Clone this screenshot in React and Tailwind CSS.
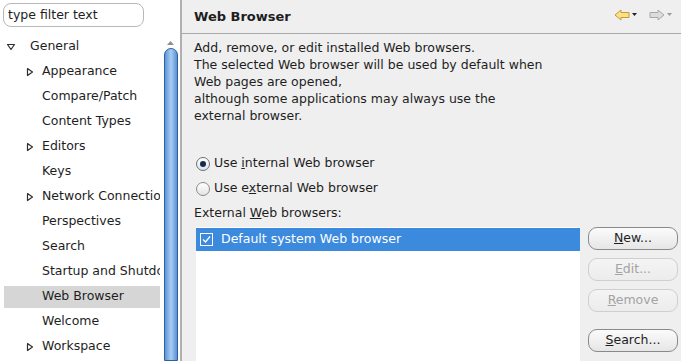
const tree = [
  { label: "Appearance", arrow: true },
  { label: "Compare/Patch" },
  { label: "Content Types" },
  { label: "Editors", arrow: true },
  { label: "Keys" },
  { label: "Network Connections", arrow: true },
  { label: "Perspectives" },
  { label: "Search" },
  { label: "Startup and Shutdown" },
  { label: "Web Browser", selected: true },
  { label: "Welcome" },
  { label: "Workspace", arrow: true },
];

function RightTri() {
  return (
    <svg width="8" height="10" viewBox="0 0 8 10" className="shrink-0">
      <path d="M1.5 1.5 L6.5 5 L1.5 8.5 Z" fill="none" stroke="#2e2e2e" strokeWidth="1.2" strokeLinejoin="round" />
    </svg>
  );
}

function DownTri() {
  return (
    <svg width="10" height="8" viewBox="0 0 10 8" className="shrink-0">
      <path d="M1.5 1.5 L8.5 1.5 L5 6.5 Z" fill="none" stroke="#2e2e2e" strokeWidth="1.2" strokeLinejoin="round" />
    </svg>
  );
}

function Arrow({ dir, enabled }) {
  const fill = enabled ? "#fbe08a" : "#dcdcdc";
  const stroke = enabled ? "#c69a2c" : "#a8a8a8";
  const d =
    dir === "left"
      ? "M1 6 L7 1 L7 3.5 L15 3.5 L15 8.5 L7 8.5 L7 11 Z"
      : "M15 6 L9 1 L9 3.5 L1 3.5 L1 8.5 L9 8.5 L9 11 Z";
  return (
    <div className="flex items-center gap-[2px]">
      <svg width="16" height="12" viewBox="0 0 16 12">
        <path d={d} fill={fill} stroke={stroke} strokeWidth="1" strokeLinejoin="round" />
      </svg>
      <svg width="5" height="4" viewBox="0 0 5 4">
        <path d="M0 0 L5 0 L2.5 3 Z" fill={enabled ? "#222" : "#9a9a9a"} />
      </svg>
    </div>
  );
}

function Button({ children, disabled }) {
  return (
    <div
      className={
        "h-[23px] w-[90px] rounded-[9px] border flex items-center justify-center bg-gradient-to-b " +
        (disabled
          ? "border-[#cfcfcf] from-[#f4f4f4] to-[#ececec] text-[#a3a3a3]"
          : "border-[#8a8a8a] from-[#fbfbfb] to-[#e6e6e6] text-[#1e1e1e]")
      }
    >
      {children}
    </div>
  );
}

export default function App() {
  return (
    <div
      className="w-[681px] h-[361px] flex overflow-hidden text-[12.5px] text-[#1e1e1e]"
      style={{ fontFamily: '"DejaVu Sans", Verdana, sans-serif' }}
    >
      {/* left: preference tree */}
      <div className="w-[180px] shrink-0 bg-white flex flex-col">
        <div className="h-[34px] shrink-0 pt-[3px] pl-[3px]">
          <div className="h-[24px] w-[141px] rounded-[8px] border border-[#b8b8b8] flex items-center pl-[4px] text-[#1e1e1e]">
            type filter text
          </div>
        </div>
        <div className="flex-1 flex min-h-0">
          <div className="flex-1 min-w-0 overflow-hidden pl-[4px] pr-[3px]">
            <div className="h-[25px] flex items-center pl-[2px] gap-[14px]">
              <DownTri />
              <span>General</span>
            </div>
            {tree.map((t) => (
              <div key={t.label} className="h-[25px] flex items-center">
                <div
                  className={
                    "h-[22px] w-full flex items-center pl-[22px] whitespace-nowrap overflow-hidden " +
                    (t.selected ? "bg-[#d6d6d6]" : "")
                  }
                >
                  <div className="w-[16px] shrink-0">{t.arrow && <RightTri />}</div>
                  <span>{t.label}</span>
                </div>
              </div>
            ))}
          </div>
          {/* scrollbar */}
          <div className="w-[17px] shrink-0 flex flex-col items-center pr-[2px]">
            <div className="h-[12px] flex items-end justify-center">
              <svg width="7" height="5" viewBox="0 0 7 5">
                <path d="M0 4 L7 4 L3.5 0 Z" fill="#8e8e8e" />
              </svg>
            </div>
            <div className="flex-1 w-[14px] mt-[2px] rounded-t-[7px] border border-[#2f5f9e] bg-gradient-to-r from-[#5d96d8] via-[#a9cdf4] to-[#5a90d2]" />
          </div>
        </div>
      </div>

      {/* right: page */}
      <div className="flex-1 bg-[#efefef] border-l-2 border-[#b0b0b0] flex flex-col">
        <div className="h-[34px] shrink-0 border-b border-[#a9a9a9] flex items-center justify-between pl-[12px] pr-[9px]">
          <span className="font-bold text-[13px] pt-[1px]">Web Browser</span>
          <div className="flex items-center gap-[12px] mt-[-3px]">
            <Arrow dir="left" enabled />
            <Arrow dir="right" />
          </div>
        </div>
        <div className="flex-1 flex flex-col pl-[12px] pr-[3px] min-h-0">
          <div className="leading-[17px] pt-[5px]">
            <div>Add, remove, or edit installed Web browsers.</div>
            <div>The selected Web browser will be used by default when</div>
            <div>Web pages are opened,</div>
            <div>although some applications may always use the</div>
            <div>external browser.</div>
          </div>
          <div className="mt-[27px] h-[25px] flex items-center gap-[4px] pl-[2px]">
            <div className="w-[14px] h-[14px] rounded-full border border-[#6f6f6f] bg-gradient-to-b from-[#ffffff] to-[#d8e4f0] flex items-center justify-center">
              <div className="w-[6px] h-[6px] rounded-full bg-[#1a2b44]" />
            </div>
            <span>
              Use <span className="underline">i</span>nternal Web browser
            </span>
          </div>
          <div className="h-[25px] flex items-center gap-[4px] pl-[2px]">
            <div className="w-[14px] h-[14px] rounded-full border border-[#8a8a8a] bg-gradient-to-b from-[#ffffff] to-[#e4e4e4]" />
            <span>
              Use e<span className="underline">x</span>ternal Web browser
            </span>
          </div>
          <div className="h-[25px] flex items-center">
            <span>
              External <span className="underline">W</span>eb browsers:
            </span>
          </div>
          <div className="flex-1 flex gap-[8px] mt-[1px] min-h-0">
            <div className="w-[384px] ml-[2px] bg-white pt-[1px]">
              <div className="h-[23px] bg-[#3b8ade] flex items-center pl-[4px] gap-[8px] text-white">
                <div className="w-[13px] h-[13px] border border-white flex items-center justify-center">
                  <svg width="9" height="9" viewBox="0 0 9 9">
                    <path d="M1 4.5 L3.5 7 L8 1.5" fill="none" stroke="#fff" strokeWidth="1.3" />
                  </svg>
                </div>
                <span>Default system Web browser</span>
              </div>
            </div>
            <div className="flex flex-col gap-[8px]">
              <Button>
                <span><span className="underline">N</span>ew...</span>
              </Button>
              <Button disabled>
                <span><span className="underline">E</span>dit...</span>
              </Button>
              <Button disabled>
                <span><span className="underline">R</span>emove</span>
              </Button>
              <div className="h-[1px]" />
              <Button>
                <span><span className="underline">S</span>earch...</span>
              </Button>
            </div>
          </div>
        </div>
      </div>
    </div>
  );
}
